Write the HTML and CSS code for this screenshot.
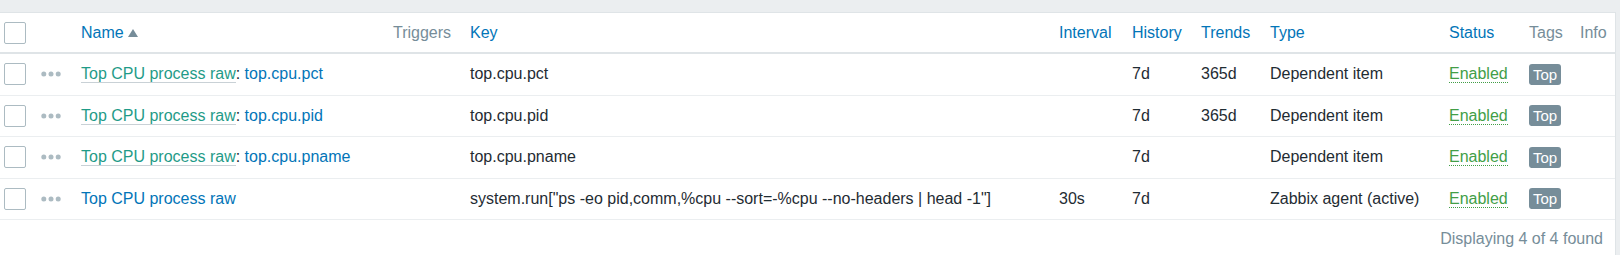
FILE: index.html
```html
<!DOCTYPE html>
<html>
<head>
<meta charset="utf-8">
<link rel="stylesheet" href="styles.css">
</head>
<body>
<div class="band"></div>
<div class="panel">
  <table class="list">
    <colgroup>
      <col class="w-cb"><col class="w-act"><col class="w-name"><col class="w-trig"><col class="w-key"><col class="w-int"><col class="w-hist"><col class="w-trend"><col class="w-type"><col class="w-status"><col class="w-tags"><col class="w-info">
    </colgroup>
    <thead>
      <tr>
        <th class="cb-cell"><span class="checkbox"></span></th>
        <th></th>
        <th><a class="hlink">Name</a><svg class="sort" width="10" height="8" viewBox="0 0 10 8"><path d="M0 8 L5 0 L10 8 Z" fill="#768d99"/></svg></th>
        <th class="muted">Triggers</th>
        <th><a class="hlink">Key</a></th>
        <th><a class="hlink">Interval</a></th>
        <th><a class="hlink">History</a></th>
        <th><a class="hlink">Trends</a></th>
        <th><a class="hlink">Type</a></th>
        <th><a class="hlink">Status</a></th>
        <th class="muted">Tags</th>
        <th class="muted">Info</th>
      </tr>
    </thead>
    <tbody>
      <tr>
        <td class="cb-cell"><span class="checkbox"></span></td>
        <td><svg class="dots" width="20" height="6" viewBox="0 0 20 6"><circle cx="2.8" cy="3" r="2.5"/><circle cx="10" cy="3" r="2.5"/><circle cx="17.2" cy="3" r="2.5"/></svg></td>
        <td><a class="tmpl">Top CPU process raw</a>: <a class="link">top.cpu.pct</a></td>
        <td></td>
        <td>top.cpu.pct</td>
        <td></td>
        <td>7d</td>
        <td>365d</td>
        <td>Dependent item</td>
        <td><a class="enabled">Enabled</a></td>
        <td><span class="tag">Top</span></td>
        <td></td>
      </tr>
      <tr>
        <td class="cb-cell"><span class="checkbox"></span></td>
        <td><svg class="dots" width="20" height="6" viewBox="0 0 20 6"><circle cx="2.8" cy="3" r="2.5"/><circle cx="10" cy="3" r="2.5"/><circle cx="17.2" cy="3" r="2.5"/></svg></td>
        <td><a class="tmpl">Top CPU process raw</a>: <a class="link">top.cpu.pid</a></td>
        <td></td>
        <td>top.cpu.pid</td>
        <td></td>
        <td>7d</td>
        <td>365d</td>
        <td>Dependent item</td>
        <td><a class="enabled">Enabled</a></td>
        <td><span class="tag">Top</span></td>
        <td></td>
      </tr>
      <tr>
        <td class="cb-cell"><span class="checkbox"></span></td>
        <td><svg class="dots" width="20" height="6" viewBox="0 0 20 6"><circle cx="2.8" cy="3" r="2.5"/><circle cx="10" cy="3" r="2.5"/><circle cx="17.2" cy="3" r="2.5"/></svg></td>
        <td><a class="tmpl">Top CPU process raw</a>: <a class="link">top.cpu.pname</a></td>
        <td></td>
        <td>top.cpu.pname</td>
        <td></td>
        <td>7d</td>
        <td></td>
        <td>Dependent item</td>
        <td><a class="enabled">Enabled</a></td>
        <td><span class="tag">Top</span></td>
        <td></td>
      </tr>
      <tr>
        <td class="cb-cell"><span class="checkbox"></span></td>
        <td><svg class="dots" width="20" height="6" viewBox="0 0 20 6"><circle cx="2.8" cy="3" r="2.5"/><circle cx="10" cy="3" r="2.5"/><circle cx="17.2" cy="3" r="2.5"/></svg></td>
        <td><a class="link">Top CPU process raw</a></td>
        <td></td>
        <td>system.run["ps -eo pid,comm,%cpu --sort=-%cpu --no-headers | head -1"]</td>
        <td>30s</td>
        <td>7d</td>
        <td></td>
        <td>Zabbix agent (active)</td>
        <td><a class="enabled">Enabled</a></td>
        <td><span class="tag">Top</span></td>
        <td></td>
      </tr>
    </tbody>
  </table>
  <div class="footer">Displaying 4 of 4 found</div>
</div>
</body>
</html>
```

FILE: styles.css
```css
html, body {
  margin: 0;
  padding: 0;
  background: #ebeef0;
  font-family: "Liberation Sans", Arial, sans-serif;
  font-size: 16px;
  color: #1f2c33;
}

.band {
  height: 12px;
}

.panel {
  width: 1615px;
  height: 242px;
  background: #ffffff;
  border-top: 1px solid #dfe4e7;
  border-right: 1px solid #dfe4e7;
}

.list {
  width: 1615px;
  table-layout: fixed;
  border-collapse: separate;
  border-spacing: 0;
}

.w-cb { width: 35px; }
.w-act { width: 40px; }
.w-name { width: 312px; }
.w-trig { width: 77px; }
.w-key { width: 589px; }
.w-int { width: 73px; }
.w-hist { width: 69px; }
.w-trend { width: 69px; }
.w-type { width: 179px; }
.w-status { width: 80px; }
.w-tags { width: 51px; }
.w-info { width: 41px; }

.list th,
.list td {
  box-sizing: border-box;
  padding: 0 6px;
  text-align: left;
  white-space: nowrap;
  vertical-align: middle;
  font-weight: normal;
}

.list th {
  height: 41px;
  border-bottom: 2px solid #dfe4e7;
}

.list td {
  height: 41.5px;
  border-bottom: 1px solid #ebeef0;
}

.list .cb-cell {
  padding-left: 4px;
  padding-right: 0;
}

.checkbox {
  display: block;
  width: 22px;
  height: 22px;
  box-sizing: border-box;
  border: 1px solid #acbbc2;
  border-radius: 2px;
  background: #fff;
}

.hlink {
  color: #0275b8;
}

.sort {
  margin-left: 4px;
  vertical-align: 1px;
}

.muted {
  color: #768d99;
}

.dots {
  display: block;
  fill: #acbbc2;
}

.link {
  color: #0275b8;
}

.tmpl {
  color: #1f9b88;
  border-bottom: 1px solid #c9d1d6;
}

.enabled {
  color: #429e47;
  border-bottom: 1px dotted #429e47;
}

.tag {
  display: inline-block;
  background: #768d99;
  color: #fff;
  padding: 0 4px;
  font-size: 15px;
  line-height: 21px;
  border-radius: 3px;
}

.footer {
  text-align: right;
  color: #768d99;
  padding: 10px 12px 0 0;
}
```
